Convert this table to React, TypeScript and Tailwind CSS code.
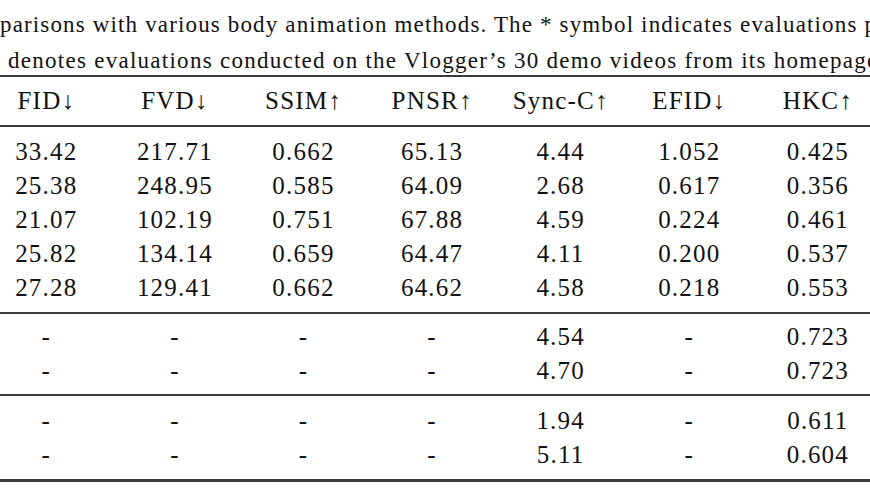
import React from "react";

const serif = { fontFamily: '"Liberation Serif", "Times New Roman", serif' };

const header = ["FID↓", "FVD↓", "SSIM↑", "PNSR↑", "Sync-C↑", "EFID↓", "HKC↑"];

const sections: string[][][] = [
  [
    ["33.42", "217.71", "0.662", "65.13", "4.44", "1.052", "0.425"],
    ["25.38", "248.95", "0.585", "64.09", "2.68", "0.617", "0.356"],
    ["21.07", "102.19", "0.751", "67.88", "4.59", "0.224", "0.461"],
    ["25.82", "134.14", "0.659", "64.47", "4.11", "0.200", "0.537"],
    ["27.28", "129.41", "0.662", "64.62", "4.58", "0.218", "0.553"],
  ],
  [
    ["-", "-", "-", "-", "4.54", "-", "0.723"],
    ["-", "-", "-", "-", "4.70", "-", "0.723"],
  ],
  [
    ["-", "-", "-", "-", "1.94", "-", "0.611"],
    ["-", "-", "-", "-", "5.11", "-", "0.604"],
  ],
];

function Row({ cells, h }: { cells: string[]; h: string }) {
  return (
    <div className={`grid grid-cols-[repeat(7,128.6px)] ${h}`}>
      {cells.map((c, i) => (
        <div key={i} className="flex items-center justify-center">
          {c}
        </div>
      ))}
    </div>
  );
}

export default function App() {
  return (
    <div
      className="w-[870px] h-[492px] overflow-hidden bg-white text-[#111]"
      style={serif}
    >
      <div className="h-[75px] pt-[7px] text-[23px] leading-[36px] whitespace-nowrap">
        <div className="tracking-[1.15px]">parisons with various body animation methods. The * symbol indicates evaluations performed</div>
        <div className="pl-[8px] tracking-[1.27px]">denotes evaluations conducted on the Vlogger’s 30 demo videos from its homepage.</div>
      </div>
      <div className="h-[2px] bg-[#3a3a3a]" />
      <div className="ml-[-18px] text-[25px] leading-[34px] tracking-[1.2px] whitespace-nowrap">
        <Row cells={header} h="h-[48px]" />
      </div>
      <div className="h-[2px] bg-[#3a3a3a]" />
      <div className="ml-[-18px] text-[25px] leading-[34px] tracking-[1.2px] whitespace-nowrap pt-[8px] pb-[7px]">
        {sections[0].map((r, i) => (
          <Row key={i} cells={r} h="h-[34px]" />
        ))}
      </div>
      <div className="h-[2px] bg-[#3a3a3a]" />
      <div className="ml-[-18px] text-[25px] leading-[34px] tracking-[1.2px] whitespace-nowrap pt-[6px] pb-[6px]">
        {sections[1].map((r, i) => (
          <Row key={i} cells={r} h="h-[34px]" />
        ))}
      </div>
      <div className="h-[2px] bg-[#3a3a3a]" />
      <div className="ml-[-18px] text-[25px] leading-[34px] tracking-[1.2px] whitespace-nowrap pt-[8px] pb-[7px]">
        {sections[2].map((r, i) => (
          <Row key={i} cells={r} h="h-[34px]" />
        ))}
      </div>
      <div className="h-[3px] bg-[#3a3a3a]" />
    </div>
  );
}
